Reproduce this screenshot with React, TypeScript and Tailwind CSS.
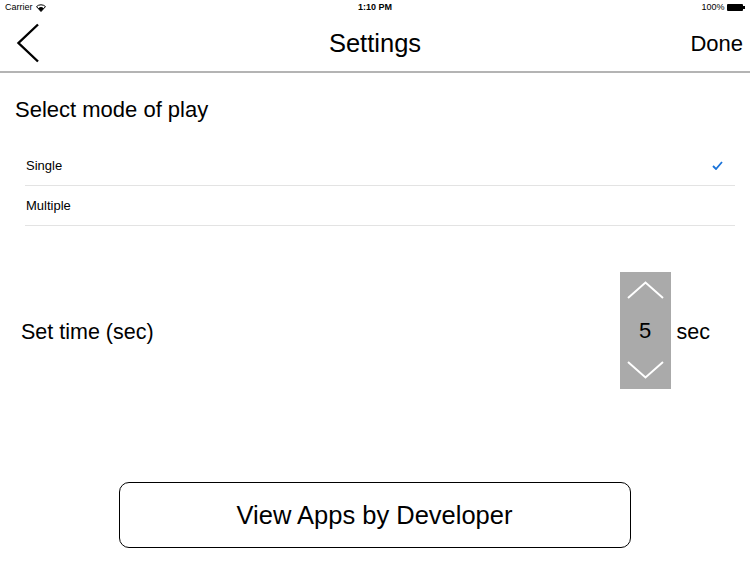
import React, { useState } from 'react';

const modes = ['Single', 'Multiple'];

const App = () => {
  const [mode, setMode] = useState('Single');
  const [seconds, setSeconds] = useState(5);

  return (
    <div className="w-[750px] h-[563px] bg-white text-black overflow-hidden flex flex-col font-['Liberation_Sans',Arial,sans-serif]">
      {/* status bar */}
      <div className="h-[15px] px-[5px] flex items-center justify-between text-[9px] leading-none">
        <div className="flex items-center gap-[3px] w-[120px]">
          <span>Carrier</span>
          <svg width="10" height="8" viewBox="0 0 10 8">
            <path d="M0.5 2.6 A6.5 6.5 0 0 1 9.5 2.6 L5 7.5 Z" fill="none" stroke="black" strokeWidth="1" />
            <path d="M2.2 4.4 A4 4 0 0 1 7.8 4.4 L5 7.5 Z" fill="black" />
          </svg>
        </div>
        <span className="font-semibold">1:10 PM</span>
        <div className="flex items-center justify-end gap-[3px] w-[120px]">
          <span>100%</span>
          <div className="flex items-center">
            <div className="w-[16px] h-[7px] bg-black rounded-[1px]" />
            <div className="w-[1.5px] h-[3px] bg-black" />
          </div>
        </div>
      </div>

      {/* navigation bar */}
      <div className="h-[58px] grid grid-cols-3 items-center border-b-2 border-[#b4b4b4]">
        <button className="flex items-center pl-[16px]">
          <svg width="24" height="40" viewBox="0 0 24 40">
            <path d="M22 1.5 L2.5 20 L22 38.5" fill="none" stroke="black" strokeWidth="2.4" />
          </svg>
        </button>
        <div className="text-center text-[25.5px] pt-[1px]">Settings</div>
        <button className="text-right pr-[7px] text-[22px] pt-[1px]">Done</button>
      </div>

      {/* mode selection */}
      <div className="pt-[24px] pl-[15px] text-[22px] leading-[25px]">Select mode of play</div>
      <div className="mt-[24px] ml-[25px] mr-[15px]">
        {modes.map((m) => (
          <button
            key={m}
            onClick={() => setMode(m)}
            className="w-full h-[40px] flex items-center justify-between pl-[1px] pr-[12px] border-b border-[#e3e3e3] text-[13px]"
          >
            <span>{m}</span>
            {mode === m && (
              <svg width="11" height="9" viewBox="0 0 11 9">
                <path d="M1 5 L4 8 L10 1" fill="none" stroke="#1a73d9" strokeWidth="1.8" />
              </svg>
            )}
          </button>
        ))}
      </div>

      {/* time setting */}
      <div className="mt-[46px] flex items-center pl-[21px] pr-[40px]">
        <span className="text-[21.5px] pt-[3px]">Set time (sec)</span>
        <div className="ml-auto flex items-center gap-[6px]">
          <div className="w-[51px] h-[117px] bg-[#aaaaaa] flex flex-col items-center justify-between pt-[9px] pb-[10px]">
            <button onClick={() => setSeconds(seconds + 1)}>
              <svg width="37" height="18" viewBox="0 0 37 18">
                <path d="M1 17 L18.5 1.5 L36 17" fill="none" stroke="white" strokeWidth="2" />
              </svg>
            </button>
            <span className="text-[22px] leading-none pt-[1px]">{seconds}</span>
            <button onClick={() => setSeconds(Math.max(1, seconds - 1))}>
              <svg width="37" height="18" viewBox="0 0 37 18">
                <path d="M1 1 L18.5 16.5 L36 1" fill="none" stroke="white" strokeWidth="2" />
              </svg>
            </button>
          </div>
          <span className="text-[21.5px] pt-[3px]">sec</span>
        </div>
      </div>

      {/* developer link */}
      <div className="mt-[93px] flex justify-center">
        <button className="w-[512px] h-[66px] ml-[-1px] border-[1.5px] border-black rounded-[10px] text-[25.5px]">
          View Apps by Developer
        </button>
      </div>
    </div>
  );
};

export default App;
